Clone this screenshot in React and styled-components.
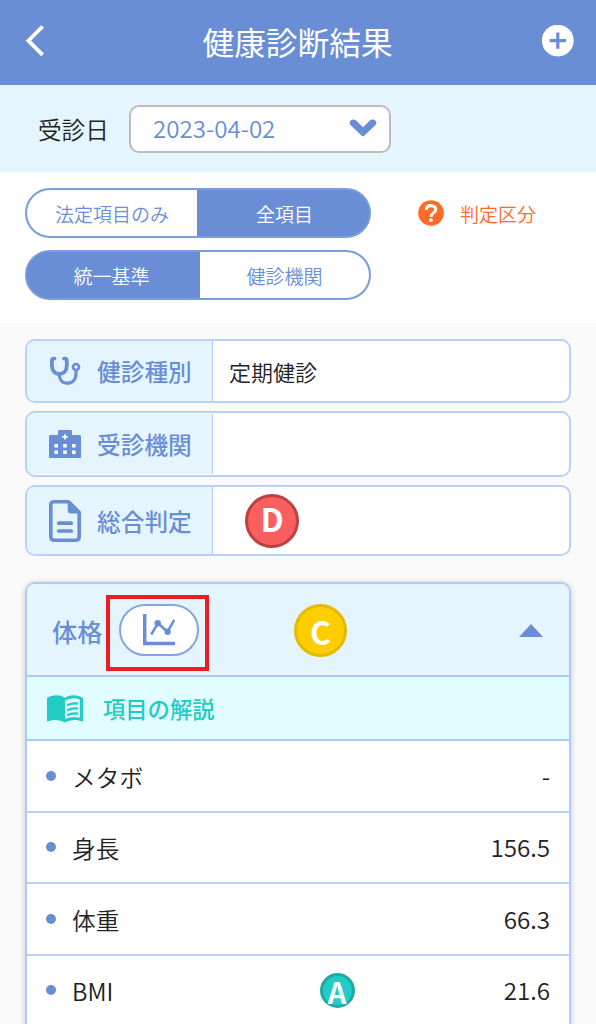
import React from "react";
import styled, { createGlobalStyle } from "styled-components";

const measurements = [
  { name: "メタボ", value: "-" },
  { name: "身長", value: "156.5" },
  { name: "体重", value: "66.3" },
  { name: "BMI", value: "21.6", grade: "A" }
];

const gradeColors = {
  A: { fill: "#22cbc3", edge: "#1ea9a6" },
  C: { fill: "#ffcd00", edge: "#e6b905" },
  D: { fill: "#fa5f60", edge: "#be4041" }
};

function BackIcon() {
  return (
    <svg width="20" height="32" viewBox="0 0 20 32" fill="none">
      <path d="M17.6 1.5 L3.4 15.7 L17.6 29.9" stroke="#fff" strokeWidth="3.8" />
    </svg>
  );
}

function AddIcon() {
  return (
    <svg width="32" height="32" viewBox="0 0 32 32">
      <circle cx="15.8" cy="15.6" r="15.9" fill="#fff" />
      <path d="M15.8 7.4 V23.8 M7.6 15.6 H24" stroke="#698ed5" strokeWidth="3.2" />
    </svg>
  );
}

function ChevronIcon() {
  return (
    <svg width="28" height="18" viewBox="0 0 28 18">
      <path
        d="M1.2 2.1 C2.7 0 5.3-.2 7.2 1.6 L14 8.2 L20.8 1.6 C22.7-.2 25.3 0 26.8 2.1 C27.9 3.8 27.3 5.3 26.3 6.3 L15.2 16.7 C14.4 17.4 13.6 17.4 12.8 16.7 L1.7 6.3 C.7 5.3 .1 3.8 1.2 2.1Z"
        fill="#698ed5"
      />
    </svg>
  );
}

function HelpIcon() {
  return (
    <svg width="26" height="26" viewBox="0 0 26 26" fill="none">
      <circle cx="13" cy="13" r="12.8" fill="#ff6b26" />
      <path
        d="M8.2 9.8 C8.4 6.9 10.4 5.6 13 5.6 C15.8 5.6 17.8 7.3 17.8 9.6 C17.8 12.5 13.2 12.8 13 16.8"
        stroke="#fff"
        strokeWidth="3.1"
      />
      <circle cx="12.9" cy="20.2" r="1.9" fill="#fff" />
    </svg>
  );
}

function StethoscopeIcon() {
  return (
    <svg width="32" height="30" viewBox="0 0 32 30" fill="none" stroke="#698ed5">
      <path
        d="M5.6 2.6 H5 C3.2 2.6 2.9 3.4 2.9 5 V9.5 C2.9 14.5 6 18 10.4 18 C14.8 18 17.8 14.5 17.8 9.5 V5 C17.8 3.4 17.3 2.6 15.6 2.6 H15"
        strokeWidth="3.8"
        strokeLinecap="round"
      />
      <path
        d="M10.2 18 C10.3 23.6 13.3 27.2 18 27.2 C23.4 27.2 27 23.4 27 17.5 V14.5"
        strokeWidth="3.2"
      />
      <circle cx="27" cy="11" r="3" strokeWidth="2.7" />
    </svg>
  );
}

function HospitalIcon() {
  return (
    <svg width="32" height="28" viewBox="0 0 32 28">
      <path
        d="M0 28 V6.4 Q0 5 1.4 5 H9 V1.4 Q9 0 10.4 0 H21.6 Q23 0 23 1.4 V5 H30.6 Q32 5 32 6.4 V28Z"
        fill="#698ed5"
      />
      <path
        d="M5.4 14h3.6v3.6H5.4z M14.2 14h3.6v3.6h-3.6z M23 14h3.6v3.6H23z M5.4 20.5h3.6v3.6H5.4z M14.2 20.5h3.6v3.6h-3.6z M23 20.5h3.6v3.6H23z"
        fill="#fff"
      />
      <path d="M16 4 V9.6 M13.2 6.8 H18.8" stroke="#fff" strokeWidth="1.7" />
    </svg>
  );
}

function ReportIcon() {
  return (
    <svg width="32" height="42" viewBox="0 0 32 42">
      <path
        d="M5 1.8 H19.5 L30.2 12.5 V36.5 Q30.2 40.2 26.5 40.2 H5.5 Q1.8 40.2 1.8 36.5 V5 Q1.8 1.8 5 1.8Z"
        fill="none"
        stroke="#698ed5"
        strokeWidth="3.6"
      />
      <path d="M18.7 1 H21 L31 11 V13.5 H22 Q18.7 13.5 18.7 10.2Z" fill="#698ed5" />
      <path
        d="M9.7 23.2 H22.3 M9.7 31 H22.3"
        stroke="#698ed5"
        strokeWidth="3.7"
        strokeLinecap="round"
      />
    </svg>
  );
}

function ChartIcon() {
  return (
    <svg width="32" height="32" viewBox="0 0 32 32" fill="none" stroke="#698ed5">
      <path d="M1.7 0 V29.5 H32" strokeWidth="3.5" />
      <path d="M8.2 20.5 L15 9.2 L24.5 17.7 L31.3 6" strokeWidth="2.5" />
      <circle cx="14.7" cy="9.2" r="3.2" fill="#698ed5" stroke="none" />
      <circle cx="24.6" cy="17.7" r="3.2" fill="#698ed5" stroke="none" />
    </svg>
  );
}

function BookIcon() {
  return (
    <svg width="36" height="28" viewBox="0 0 36 28">
      <path
        d="M0 2.9 C5.5-.5 13-.5 18 2.8 C23-.5 30.5-.5 36 2.9 V26.6 C30.5 24.2 23 24.2 18 27.5 C13 24.2 5.5 24.2 0 26.6Z"
        fill="#22cbc3"
      />
      <path
        d="M18 5.8 C22.5 3 28 2.5 32.8 4.8 V22.8 C27.5 21.4 22.5 21.8 18 24.2Z"
        fill="#e2fdff"
      />
      <path
        d="M20.2 10.2 C23.8 8.4 27.3 8 31.2 8.7 M20.2 15.2 C23.8 13.4 27.3 13 31.2 13.7 M20.2 20.2 C23.8 18.4 27.3 18 31.2 18.7"
        stroke="#22cbc3"
        strokeWidth="2.2"
        fill="none"
      />
    </svg>
  );
}

function Grade({ grade, size, font, shift = 0 }) {
  return (
    <GradeCircle $color={gradeColors[grade]} $size={size} $font={font} $shift={shift}>
      {grade}
    </GradeCircle>
  );
}

function App() {
  return (
    <Page>
      <GlobalStyle />
      <Header>
        <PlainBtn aria-label="戻る">
          <BackIcon />
        </PlainBtn>
        <Title>健康診断結果</Title>
        <PlainBtn aria-label="追加">
          <AddIcon />
        </PlainBtn>
      </Header>

      <DateBar>
        <DateLabel>受診日</DateLabel>
        <DateSelect>
          2023-04-02
          <ChevronIcon />
        </DateSelect>
      </DateBar>

      <Filters>
        <ToggleList>
          <Toggle $first="170px">
            <ToggleBtn>法定項目のみ</ToggleBtn>
            <ToggleBtn $active $pad="0 0 0 3px">
              全項目
            </ToggleBtn>
          </Toggle>
          <Toggle $first="173px">
            <ToggleBtn $active $pad="0 4px 0 0">
              統一基準
            </ToggleBtn>
            <ToggleBtn>健診機関</ToggleBtn>
          </Toggle>
        </ToggleList>
        <HelpLink>
          <HelpIcon />
          判定区分
        </HelpLink>
      </Filters>

      <Content>
        <SummaryList>
          <Summary $height="63.5px">
            <SummaryLabel>
              <StethoscopeIcon />
              健診種別
            </SummaryLabel>
            <SummaryValue>定期健診</SummaryValue>
          </Summary>
          <Summary $height="66.5px" $inset>
            <SummaryLabel>
              <HospitalIcon />
              受診機関
            </SummaryLabel>
            <SummaryValue />
          </Summary>
          <Summary $height="71px">
            <SummaryLabel>
              <ReportIcon />
              総合判定
            </SummaryLabel>
            <SummaryValue $grade>
              <Grade grade="D" size={54} font={32.5} shift={4} />
            </SummaryValue>
          </Summary>
        </SummaryList>

        <Panel>
          <PanelHeader>
            <PanelTitle>体格</PanelTitle>
            <Marker>
              <ChartBtn aria-label="グラフ">
                <ChartIcon />
              </ChartBtn>
            </Marker>
            <Grade grade="C" size={53} font={32} />
            <Triangle />
          </PanelHeader>
          <Guide>
            <BookIcon />
            <GuideText>項目の解説</GuideText>
          </Guide>
          {measurements.map((item) => (
            <Row key={item.name}>
              <Dot />
              <RowName>{item.name}</RowName>
              <RowGrade>
                {item.grade && <Grade grade={item.grade} size={35} font={29} shift={-2} />}
              </RowGrade>
              <RowValue>{item.value}</RowValue>
            </Row>
          ))}
        </Panel>
      </Content>
    </Page>
  );
}
export default App;

const GlobalStyle = createGlobalStyle`
  * {
    box-sizing: border-box;
  }

  body {
    margin: 0;
    background-color: #fafafa;
    font-family: "Noto Sans CJK JP", sans-serif;
    font-weight: 350;
    color: #222;
  }

  button {
    padding: 0;
    border: none;
    background: none;
    font: inherit;
    color: inherit;
    cursor: pointer;
  }

  svg {
    display: block;
    flex-shrink: 0;
  }
`;

const Page = styled.div`
  height: 1024px;
  overflow: hidden;
`;

const Header = styled.header`
  display: flex;
  align-items: center;
  justify-content: space-between;
  height: 85px;
  padding: 0 22px 4px 25px;
  background-color: #698ed5;
  color: white;
`;

const PlainBtn = styled.button`
  width: 32px;
`;

const Title = styled.h1`
  margin: 0 4px 0 0;
  font-size: 31.7px;
  font-weight: 400;
  line-height: 46px;
`;

const DateBar = styled.div`
  display: flex;
  align-items: center;
  height: 87px;
  padding-left: 38px;
  background-color: #e4f5fe;
`;

const DateLabel = styled.span`
  width: 91px;
  font-size: 23.6px;
  line-height: 34px;
`;

const DateSelect = styled.button`
  display: flex;
  align-items: center;
  justify-content: space-between;
  width: 262px;
  height: 48px;
  padding: 0 12px 1px 22px;
  border: 2px solid #bcbcbc;
  border-radius: 10px;
  background-color: white;
  color: #698ed5;
  font-size: 24.1px;
  line-height: 34px;
`;

const Filters = styled.div`
  display: flex;
  height: 151px;
  padding: 16px 0 0 25px;
  background-color: white;
`;

const ToggleList = styled.div`
  display: grid;
  align-content: start;
  gap: 12px;
  width: 346px;
`;

const Toggle = styled.div`
  display: grid;
  grid-template-columns: ${(props) => props.$first} 1fr;
  height: 50px;
  border: 2px solid #7c9ddb;
  border-radius: 25px;
  background-color: #698ed5;
  overflow: hidden;
`;

const ToggleBtn = styled.button`
  padding: ${(props) => props.$pad || "0"};
  background-color: ${(props) => (props.$active ? "#698ed5" : "white")};
  color: ${(props) => (props.$active ? "white" : "#698ed5")};
  font-size: 19px;
`;

const HelpLink = styled.button`
  display: flex;
  align-items: center;
  gap: 16px;
  height: 50px;
  margin-left: 47px;
  color: #ff6b26;
  font-size: 19px;
`;

const Content = styled.main`
  padding: 16px 25px 0;
`;

const SummaryList = styled.div`
  display: grid;
  gap: 8px;
`;

const Summary = styled.div`
  display: grid;
  grid-template-columns: 186px 1fr;
  height: ${(props) => props.$height};
  padding: ${(props) => (props.$inset ? "1px 0" : "0")};
  border: 2px solid #b7d1fb;
  border-radius: 10px;
  background-color: white;
  overflow: hidden;
`;

const SummaryLabel = styled.div`
  display: flex;
  align-items: center;
  gap: 16px;
  padding-left: 22px;
  border-right: 1px solid #adcafa;
  border-radius: 6px 0 0 6px;
  background-color: #e4f5fe;
  color: #698ed5;
  font-size: 23.7px;
  font-weight: 500;
`;

const SummaryValue = styled.div`
  display: flex;
  align-items: center;
  padding-left: ${(props) => (props.$grade ? "32px" : "16px")};
  font-size: 22px;
  line-height: 30px;
`;

const GradeCircle = styled.span`
  display: flex;
  align-items: center;
  justify-content: center;
  flex-shrink: 0;
  width: ${(props) => props.$size}px;
  height: ${(props) => props.$size}px;
  padding-bottom: ${(props) => Math.max(props.$shift, 0)}px;
  padding-top: ${(props) => Math.max(-props.$shift, 0)}px;
  border: 3px solid ${(props) => props.$color.edge};
  border-radius: 50%;
  background-color: ${(props) => props.$color.fill};
  color: white;
  font-size: ${(props) => props.$font}px;
  font-weight: 700;
  line-height: 1;
`;

const Panel = styled.section`
  margin-top: 26px;
  border: 2px solid #adcafa;
  border-radius: 10px 10px 0 0;
  background-color: white;
  box-shadow: 0 1px 6px rgba(0, 0, 0, 0.2);
  overflow: hidden;
`;

const PanelHeader = styled.div`
  display: flex;
  align-items: center;
  height: 93px;
  padding: 2px 26px 0 25px;
  border-bottom: 2px solid #adcafa;
  background-color: #e4f5fe;
`;

const PanelTitle = styled.h2`
  width: 54px;
  margin: 1px 0 0;
  color: #698ed5;
  font-size: 25.2px;
  font-weight: 500;
  white-space: nowrap;
`;

const Marker = styled.div`
  display: flex;
  align-items: center;
  justify-content: center;
  width: 103px;
  height: 76px;
  margin: 4px 85px 0 0;
  padding: 0 0 5px 2px;
  border: 4px solid #ed1c24;
`;

const ChartBtn = styled.button`
  display: flex;
  align-items: center;
  justify-content: center;
  width: 80px;
  height: 52px;
  border: 2px solid #86a5e0;
  border-radius: 26px;
  background-color: white;
`;

const Triangle = styled.span`
  margin-left: auto;
  border: 12.5px solid transparent;
  border-top: none;
  border-bottom: 13px solid #698ed5;
`;

const Guide = styled.div`
  display: flex;
  align-items: center;
  gap: 20px;
  height: 64px;
  padding: 2px 0 0 20px;
  border-bottom: 2px solid #adcafa;
  background-color: #e2fdff;
  color: #22cbc3;
  font-size: 22.3px;
  font-weight: 500;
`;

const GuideText = styled.span`
  padding-bottom: 3px;
`;

const Row = styled.div`
  display: grid;
  grid-template-columns: 25px 201px 130px 1fr;
  align-items: center;
  height: 71.5px;
  padding: 0 19px 0 19px;
  border-bottom: 2px solid #b7d1fb;
  font-size: 23.7px;
`;

const Dot = styled.span`
  width: 10px;
  height: 10px;
  border-radius: 50%;
  background-color: #698ed5;
`;

const RowName = styled.span`
  padding: 2px 0 0 1px;
`;

const RowGrade = styled.span`
  display: flex;
  justify-content: center;
`;

const RowValue = styled.span`
  padding-bottom: 1px;
  font-size: 24.2px;
  text-align: right;
`;
